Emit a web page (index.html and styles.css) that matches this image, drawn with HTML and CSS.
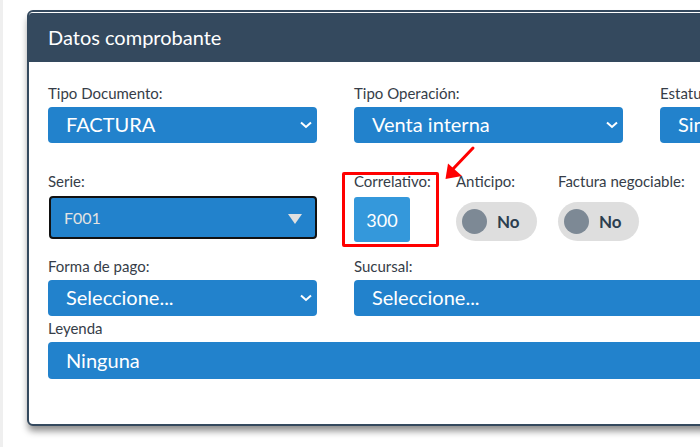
FILE: index.html
```html
<!DOCTYPE html>
<html lang="es">
<head>
<meta charset="utf-8">
<title>Datos comprobante</title>
<link rel="stylesheet" href="styles.css">
</head>
<body>
<div class="page">
  <div class="card">
    <div class="card-header">Datos comprobante</div>
    <div class="card-body">
      <div class="row row1">
        <div class="field col">
          <label class="lbl">Tipo Documento:</label>
          <div class="select"><span>FACTURA</span><svg class="chev" width="12" height="8" viewBox="0 0 12 8"><path d="M1 1.5 L6 6 L11 1.5" fill="none" stroke="#fff" stroke-width="2"/></svg></div>
        </div>
        <div class="field col">
          <label class="lbl">Tipo Operación:</label>
          <div class="select"><span>Venta interna</span><svg class="chev" width="12" height="8" viewBox="0 0 12 8"><path d="M1 1.5 L6 6 L11 1.5" fill="none" stroke="#fff" stroke-width="2"/></svg></div>
        </div>
        <div class="field col">
          <label class="lbl">Estatus:</label>
          <div class="select"><span>Sin estatus</span><svg class="chev" width="12" height="8" viewBox="0 0 12 8"><path d="M1 1.5 L6 6 L11 1.5" fill="none" stroke="#fff" stroke-width="2"/></svg></div>
        </div>
      </div>

      <div class="row row2">
        <div class="field col">
          <label class="lbl lbl-serie">Serie:</label>
          <div class="combo"><span>F001</span><span class="tri"></span></div>
        </div>
        <div class="field sub corr">
          <label class="lbl lbl-corr">Correlativo:</label>
          <div class="num">300</div>
          <div class="highlight"></div>
          <svg class="arrow" width="40" height="40" viewBox="440 144 40 40">
            <line x1="473" y1="148" x2="453" y2="169" stroke="#ff0000" stroke-width="3" stroke-linecap="round"/>
            <polygon points="445.5,179 448,163.5 462,176" fill="#ff0000"/>
          </svg>
        </div>
        <div class="field sub">
          <label class="lbl lbl-tog">Anticipo:</label>
          <div class="toggle"><span class="knob"></span><span class="tog-text">No</span></div>
        </div>
        <div class="field sub">
          <label class="lbl lbl-tog">Factura negociable:</label>
          <div class="toggle"><span class="knob"></span><span class="tog-text">No</span></div>
        </div>
      </div>

      <div class="row row3">
        <div class="field col">
          <label class="lbl">Forma de pago:</label>
          <div class="select"><span>Seleccione...</span><svg class="chev" width="12" height="8" viewBox="0 0 12 8"><path d="M1 1.5 L6 6 L11 1.5" fill="none" stroke="#fff" stroke-width="2"/></svg></div>
        </div>
        <div class="field col-wide">
          <label class="lbl">Sucursal:</label>
          <div class="select"><span>Seleccione...</span><svg class="chev" width="12" height="8" viewBox="0 0 12 8"><path d="M1 1.5 L6 6 L11 1.5" fill="none" stroke="#fff" stroke-width="2"/></svg></div>
        </div>
      </div>

      <div class="field leyenda">
        <label class="lbl">Leyenda</label>
        <div class="select select-tall"><span>Ninguna</span></div>
      </div>
    </div>
  </div>
</div>
</body>
</html>
```

FILE: styles.css
```css
html, body {
  margin: 0;
  padding: 0;
  background: #ffffff;
  overflow: hidden;
  font-family: Lato, "Open Sans", Arial, sans-serif;
}

.page {
  width: 700px;
  height: 447px;
  box-sizing: border-box;
  border-left: 3px solid #efefef;
  padding: 10px 0 0 24px;
  overflow: hidden;
}

.card {
  width: 1000px;
  border: 2px solid #34495e;
  border-radius: 6px;
  background: #ffffff;
  padding-top: 1px;
  box-shadow: 0 6px 7px -1px rgba(0, 0, 0, 0.45);
}

.card-header {
  height: 49px;
  line-height: 48px;
  background: #34495e;
  color: #ffffff;
  font-size: 20px;
  padding-left: 19px;
  border-radius: 3px 3px 0 0;
}

.card-body {
  padding: 21px 19px 45px;
}

.row {
  display: flex;
  gap: 37px;
}

.row2 {
  margin-top: 28px;
  gap: 0;
}

.row3 {
  margin-top: 14px;
}

.field {
  position: relative;
}

.col {
  width: 269px;
  flex: none;
}

.row2 .col {
  margin-right: 37px;
}

.col-wide {
  width: 575px;
  flex: none;
}

.sub {
  width: 102px;
  flex: none;
}

.lbl {
  display: block;
  font-size: 15px;
  line-height: 20px;
  color: #363d48;
  margin-bottom: 4px;
  white-space: nowrap;
}

.lbl-serie { margin-bottom: 5px; }
.lbl-corr { margin-bottom: 6px; }
.lbl-tog { margin-bottom: 11px; }

.select {
  position: relative;
  height: 36px;
  box-sizing: border-box;
  padding-bottom: 2px;
  background: #2282cc;
  border-radius: 4px;
  color: #ffffff;
  font-size: 20px;
  padding-left: 18px;
  display: flex;
  align-items: center;
}

.select-tall {
  height: 37px;
}

.chev {
  position: absolute;
  right: 5px;
  top: 14px;
}

.combo {
  position: relative;
  height: 43px;
  box-sizing: border-box;
  width: 268px;
  margin-left: 1px;
  border: 2px solid #111111;
  border-radius: 4px;
  background: #2282cc;
  color: #e2e2e2;
  font-size: 16px;
  padding-left: 13px;
  padding-bottom: 1px;
  display: flex;
  align-items: center;
}

.tri {
  position: absolute;
  right: 13px;
  top: 16px;
  width: 0;
  height: 0;
  border-left: 7.5px solid transparent;
  border-right: 7.5px solid transparent;
  border-top: 10px solid #e0e0e0;
}

.num {
  width: 56px;
  height: 45px;
  background: #3498db;
  border-radius: 3px;
  color: #ffffff;
  font-size: 18px;
  display: flex;
  align-items: center;
  justify-content: center;
}

.highlight {
  position: absolute;
  left: -12px;
  top: 1px;
  width: 97px;
  height: 75px;
  box-sizing: border-box;
  border: 3px solid #ff0000;
  border-radius: 2px;
}

.arrow {
  position: absolute;
  left: 86px;
  top: -27px;
  overflow: visible;
}

.toggle {
  width: 81px;
  height: 39px;
  box-sizing: border-box;
  background: #dedede;
  border-radius: 20px;
  display: flex;
  align-items: center;
  padding-left: 6px;
}

.knob {
  width: 25px;
  height: 25px;
  border-radius: 50%;
  background: #7d8995;
  flex: none;
}

.tog-text {
  margin-left: 10px;
  font-size: 17px;
  font-weight: 700;
  color: #2c3e50;
}

.leyenda {
  margin-top: 2px;
}
```
